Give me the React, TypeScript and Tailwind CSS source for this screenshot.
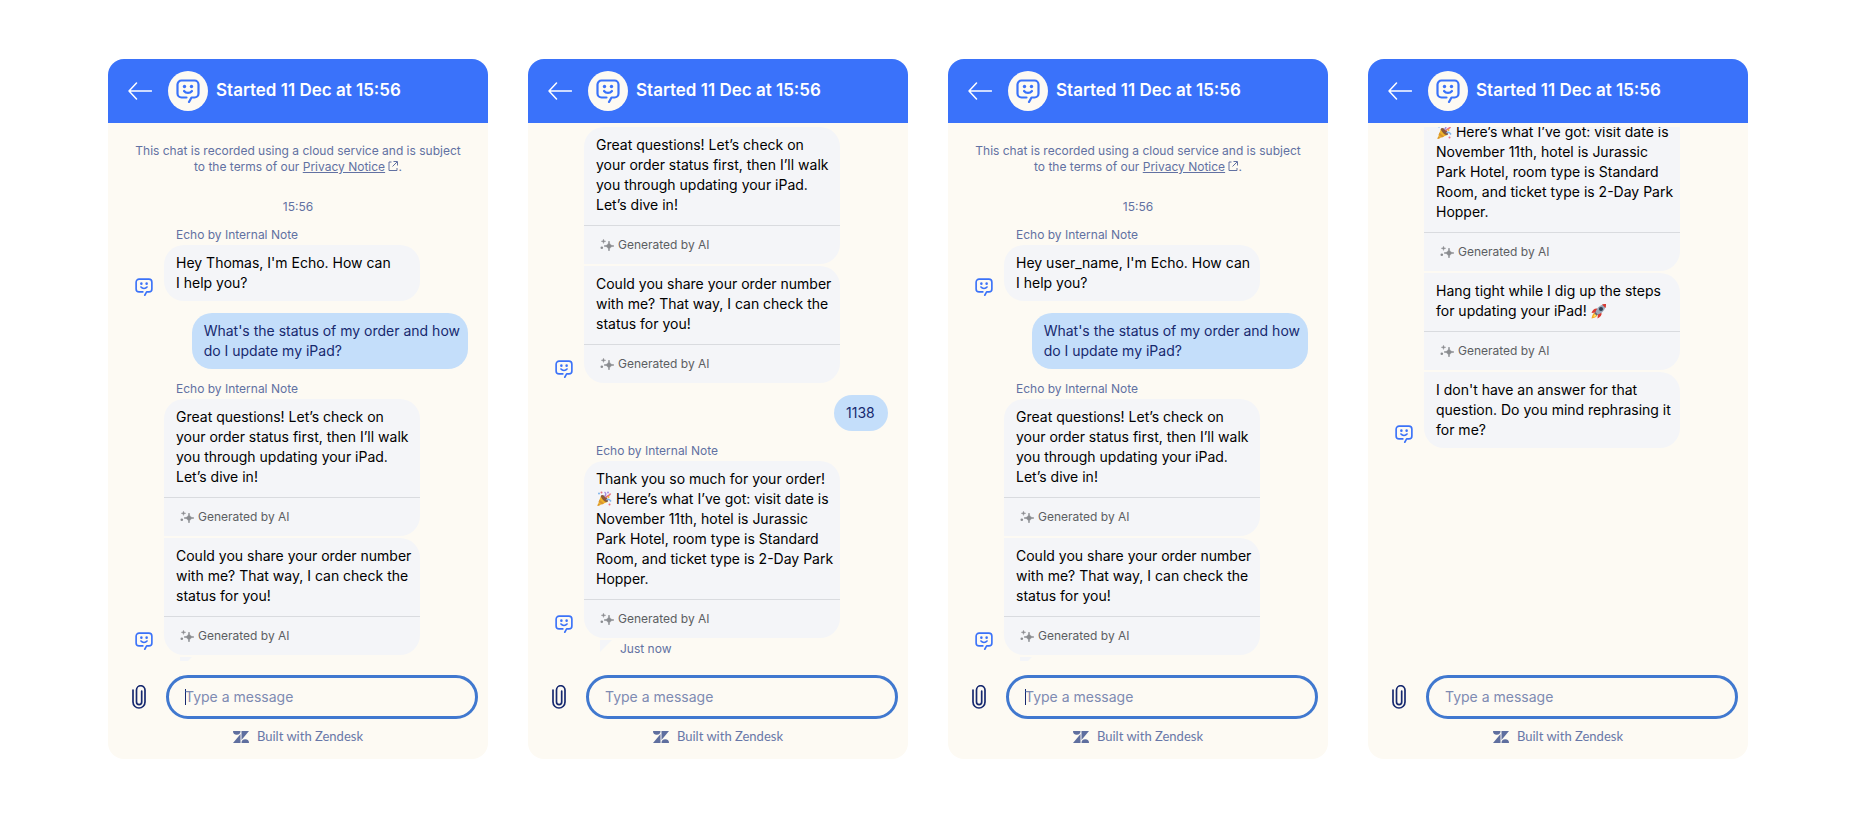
import type { ReactNode } from "react";

type Message =
  | { from: "bot"; label?: boolean; parts: { text: ReactNode; ai?: boolean }[]; justNow?: boolean }
  | { from: "user"; text: string };

interface Chat {
  id: string;
  intro?: boolean;
  focused?: boolean;
  scrolled?: boolean;
  messages: Message[];
}

const Popper = () => (
  <svg role="img" aria-label="party popper" viewBox="0 0 32 32" className="inline-block size-4 align-text-bottom">
    <path d="M10 9 23 22 3 30Z" fill="#f0b429" />
    <path d="M7 17l9 8-4 2-7-5zM4 25l5 3-6 2z" fill="#d9952f" />
    <ellipse cx="17" cy="15" rx="4" ry="9" transform="rotate(-45 17 15)" fill="#8a5a3c" />
    <path d="M17 11c4-3 3-7 0-9" fill="none" stroke="#a98fe0" strokeWidth="3" />
    <path d="M20 14c1-6 7-3 9-9" fill="none" stroke="#e8707f" strokeWidth="3" />
    <path d="M21 18c4-3 7 0 9 3" fill="none" stroke="#7fb4ea" strokeWidth="3" />
    <circle cx="6" cy="5" r="2" fill="#7fb4ea" />
    <circle cx="11" cy="3" r="2" fill="#e8707f" />
    <circle cx="25" cy="12" r="2" fill="#f0b429" />
    <circle cx="27" cy="27" r="2" fill="#e8707f" />
    <circle cx="24" cy="3" r="2" fill="#a98fe0" />
  </svg>
);

const Rocket = () => (
  <svg role="img" aria-label="rocket" viewBox="0 0 32 32" className="inline-block size-4 align-text-bottom">
    <path d="M8 19C3 21 2 26 1 31c5-1 10-2 12-7z" fill="#f7a823" />
    <path d="M9 22c-3 1-4 4-4 6 2 0 5-1 6-4z" fill="#ffe066" />
    <path d="M13 11C7 10 3 14 1 20l9-1zM21 19c1 6-2 9-8 12l1-10z" fill="#d93a32" />
    <path d="M9 18C12 9 19 3 30 2c-1 11-7 18-16 21z" fill="#9aa8b8" />
    <path d="M22 3c3-1 6-1 8-1 0 2 0 5-1 8z" fill="#d93a32" />
    <circle cx="20" cy="12" r="4" fill="#2c3e52" />
    <path d="M9 18l5 5-3 2-4-4z" fill="#5d6b79" />
  </svg>
);

const BotIcon = ({ className }: { className: string }) => (
  <svg viewBox="0 0 24 24" fill="none" stroke="currentColor" strokeLinecap="round" strokeLinejoin="round" strokeWidth="2.200" className={className} aria-hidden="true">
    <path d="M10.500 18.500H5.500a4 4 0 0 1-4-4v-9a4 4 0 0 1 4-4h13a4 4 0 0 1 4 4v9a4 4 0 0 1-4 4H15.500L13 23" />
    <path d="M8 12c2 2.600 6 2.600 8 0" />
    <circle cx="8.500" cy="7.500" r="1.700" fill="currentColor" stroke="none" />
    <circle cx="15.500" cy="7.500" r="1.700" fill="currentColor" stroke="none" />
  </svg>
);

const Sparkles = () => (
  <svg viewBox="0 0 14 12" fill="currentColor" className="h-3 w-3.5" aria-hidden="true">
    <path d="M9 2C9.500 5.500 10.500 6.500 14 7 10.500 7.500 9.500 8.500 9 12 8.500 8.500 7.500 7.500 4 7 7.500 6.500 8.500 5.500 9 2Z" stroke="currentColor" strokeWidth=".7" />
    <path d="M3.500 0C3.800 1.600 4.200 2 6 2.300 4.200 2.600 3.800 3 3.500 4.600 3.200 3 2.800 2.600 1 2.300 2.800 2 3.200 1.600 3.500 0Z" stroke="currentColor" strokeWidth=".3" />
    <circle cx="1.800" cy="8.700" r="1.300" />
  </svg>
);

const great = <>Great questions! Let’s check on<br />your order status first, then I’ll walk you through updating your iPad. Let’s dive in!</>;
const orderNumber = <>Could you share your order number with me? That way, I can check the status for you!</>;
const thanks = (
  <>
    Thank you so much for your order!<br />
    <Popper /> Here’s what I’ve got: visit date is November 11th, hotel is Jurassic<br />
    Park Hotel, room type is Standard<br />
    Room, and ticket type is 2-Day Park Hopper.
  </>
);

const question = "What's the status of my order and how\ndo I update my iPad?";

const opening = (name: string): Message[] => [
  { from: "bot", label: true, parts: [{ text: <>Hey {name}, I'm Echo. How can<br />I help you?</> }] },
  { from: "user", text: question },
  { from: "bot", label: true, parts: [{ text: great, ai: true }, { text: orderNumber, ai: true }], justNow: true },
];

const CHATS: Chat[] = [
  { id: "thomas", intro: true, focused: true, messages: opening("Thomas") },
  {
    id: "order",
    messages: [
      { from: "bot", parts: [{ text: great, ai: true }, { text: orderNumber, ai: true }] },
      { from: "user", text: "1138" },
      { from: "bot", label: true, parts: [{ text: thanks, ai: true }], justNow: true },
    ],
  },
  { id: "user", intro: true, focused: true, messages: opening("user_name") },
  {
    id: "fallback",
    scrolled: true,
    messages: [
      {
        from: "bot",
        parts: [
          { text: thanks, ai: true },
          { text: <>Hang tight while I dig up the steps for updating your iPad! <Rocket /></>, ai: true },
          { text: <>I don't have an answer for that<br />question. Do you mind rephrasing it for me?</> },
        ],
      },
    ],
  },
];

function Intro() {
  return (
    <div className="pt-4 text-center text-xs text-[#6271a2]">
      <p className="px-4">
        This chat is recorded using a cloud service and is subject
        <br />
        to the terms of our{" "}
        <a href="#privacy" className="underline">Privacy Notice</a>{" "}
        <svg viewBox="0 0 10 10" fill="none" stroke="currentColor" className="inline-block size-2.5 align-baseline" aria-hidden="true">
          <path d="M3.500 1H1v8.500h8V7M5.500.5h4v4M9 1 4.500 5.500" />
        </svg>
        .
      </p>
      <p className="mt-6 mb-3">15:56</p>
    </div>
  );
}

function MessageGroup({ message }: { message: Message }) {
  if (message.from === "user") {
    return (
      <div className="my-3 flex justify-end pr-5">
        <p className="min-w-[54px] rounded-[20px] bg-[#c4defa] py-2 pr-2 pl-3 text-sm whitespace-pre-line text-[#17296f]">{message.text}</p>
      </div>
    );
  }

  return (
    <div className="flex">
      <div className="flex w-14 shrink-0 flex-col justify-end">
        <BotIcon className={message.justNow ? "mb-[25px] ml-[27px] size-[18px] text-[#3b72f8]" : "mb-[5px] ml-[27px] size-[18px] text-[#3b72f8]"} />
      </div>
      <div className="w-64">
        {message.label && <p className="mb-0.5 pl-3 text-xs text-[#6271a2]">Echo by Internal Note</p>}
        <div className="flex flex-col gap-0.5">
          {message.parts.map((part, i) => (
            <div key={i} className="rounded-r-[20px] bg-[#f4f5f8] first:rounded-tl-[20px] last:rounded-bl-[20px]">
              <p className={part.ai ? "pt-2 pr-1 pb-2.5 pl-3 text-sm text-black" : "py-2 pr-1 pl-3 text-sm text-black"}>{part.text}</p>
              {part.ai && (
                <div className="flex h-[39px] items-center gap-1 border-t border-[#d9dbdf] pl-4 text-xs text-[#5c5e62]">
                  <span className="text-[#8a8c90]"><Sparkles /></span>
                  Generated by AI
                </div>
              )}
            </div>
          ))}
        </div>
        {message.justNow && (
          <div className="mt-0.5 flex h-[18px] items-center gap-2 pl-4 text-xs text-[#6271a2]">
            <svg viewBox="0 0 12 12" className="size-3 self-start fill-[#f4f5f8]" aria-hidden="true">
              <path d="M0 0h12L0 12z" />
            </svg>
            Just now
          </div>
        )}
      </div>
    </div>
  );
}

function Composer({ id, focused }: { id: string; focused?: boolean }) {
  return (
    <footer className="flex flex-col items-center pt-3.5">
      <div className="flex w-full items-center gap-4 pr-2.5 pl-5">
        <button type="button" aria-label="Attach a file" className="flex w-[22px] justify-center text-[#17296f]">
          <svg viewBox="0 0 14 24" fill="none" stroke="currentColor" strokeWidth="1.700" strokeLinecap="round" className="h-6 w-3.5" aria-hidden="true">
            <path d="M1 5v12a6 6 0 0 0 12 0V5a4 4 0 0 0-8.500 0v12a2.600 2.600 0 0 0 5.200 0V6" />
          </svg>
        </button>
        <label htmlFor={id} className="sr-only">Message</label>
        <div className="flex h-11 flex-1 items-center rounded-full border-3 border-[#4078cf] pl-4">
          {focused && <span className="-mr-px h-4 w-px bg-[#17296f]" />}
          <input id={id} type="text" placeholder="Type a message" className="w-full bg-transparent text-sm text-[#17296f] outline-none placeholder:text-[#7e8ab2]" />
        </div>
      </div>
      <a href="#zendesk" className="mt-2 mb-3 flex h-5 items-center gap-2 font-[Lato,sans-serif] text-[13px] text-[#6877a8]">
        <svg viewBox="0 0 16 12" className="h-3 w-4 fill-[#5f6f9f]" aria-hidden="true">
          <path d="M7.500 3v9H0zM7.500 0A3.750 3.750 0 0 1 0 0zM8.500 12a3.750 3.750 0 0 1 7.500 0zM8.500 9V0H16z" />
        </svg>
        Built with Zendesk
      </a>
    </footer>
  );
}

function ChatWindow({ chat }: { chat: Chat }) {
  return (
    <section className="flex h-[700px] flex-col overflow-hidden rounded-2xl bg-[#fdfaf3]">
      <header className="flex h-16 shrink-0 items-center bg-[#3a72fa] px-5 text-white">
        <button type="button" aria-label="Back">
          <svg viewBox="0 0 24 18" fill="none" stroke="currentColor" strokeWidth="1.500" strokeLinecap="round" strokeLinejoin="round" className="h-[18px] w-6" aria-hidden="true">
            <path d="M8.500 1 1 9l7.500 8M1 9h22.500" />
          </svg>
        </button>
        <span className="ml-4 flex size-10 items-center justify-center rounded-full bg-[#fdfaf3] text-[#3a72fa]">
          <BotIcon className="size-6" />
        </span>
        <h2 className="ml-2 text-[17px] font-semibold">Started 11 Dec at 15:56</h2>
      </header>
      <div className="mt-1 min-h-0 flex-1 overflow-hidden">
        <div className={chat.scrolled ? "-mt-[33px]" : ""}>
          {chat.intro && <Intro />}
          {chat.messages.map((message, i) => (
            <MessageGroup key={i} message={message} />
          ))}
        </div>
      </div>
      <Composer id={`message-${chat.id}`} focused={chat.focused} />
    </section>
  );
}

export default function App() {
  return (
    <main className="grid min-h-screen grid-cols-4 gap-10 bg-white pt-[59px] pr-[109px] pb-15 pl-[108px] font-[Inter,sans-serif]">
      {CHATS.map((chat) => (
        <ChatWindow key={chat.id} chat={chat} />
      ))}
    </main>
  );
}
